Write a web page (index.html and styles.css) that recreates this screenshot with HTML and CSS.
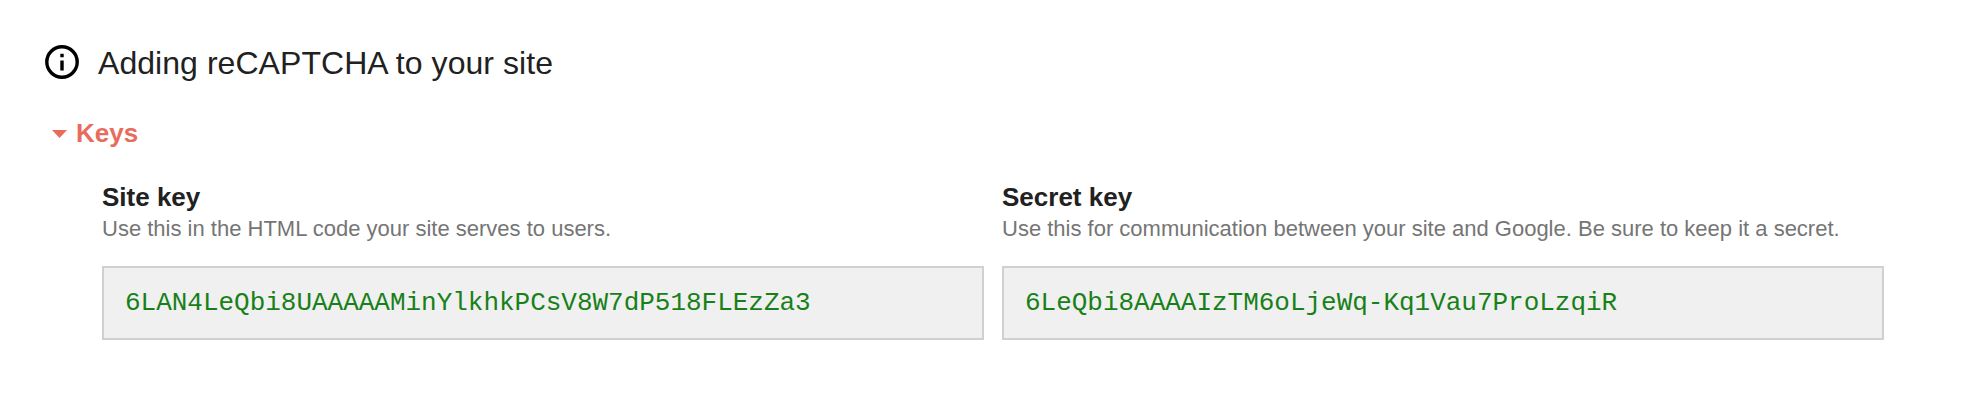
FILE: index.html
```html
<!DOCTYPE html>
<html lang="en">
<head>
<meta charset="utf-8">
<title>Adding reCAPTCHA to your site</title>
<link rel="stylesheet" href="styles.css">
</head>
<body>
<header class="head">
<svg class="info" viewBox="0 0 34 34"><circle cx="17" cy="17" r="15.2" fill="none" stroke="#000" stroke-width="3.4"/><path d="M15.3 8.8h3.4v3.4h-3.4zM15.3 15.5h3.4v10h-3.4z"/></svg>
<h1 class="title">Adding reCAPTCHA to your site</h1>
</header>
<h2 class="section"><svg class="arrow" viewBox="0 0 15 8"><path d="M0 0h15L7.5 8z"/></svg><span>Keys</span></h2>
<main class="keys">
<section class="card">
<h3 class="label">Site key</h3>
<p class="help">Use this in the HTML code your site serves to users.</p>
<div class="value">6LAN4LeQbi8UAAAAAMinYlkhkPCsV8W7dP518FLEzZa3</div>
</section>
<section class="card">
<h3 class="label">Secret key</h3>
<p class="help">Use this for communication between your site and Google. Be sure to keep it a secret.</p>
<div class="value">6LeQbi8AAAAIzTM6oLjeWq-Kq1Vau7ProLzqiR</div>
</section>
</main>
</body>
</html>
```
FILE: styles.css
```css
* { box-sizing: border-box; }
body { margin: 0; padding: 42px 0 0 45px; background: #fff; color: #212121; font-family: "Liberation Sans", Arial, sans-serif; }
h1, h2, h3, p { margin: 0; }
.head { display: flex; gap: 19px; height: 40px; }
.info { width: 34px; height: 34px; margin-top: 3px; flex: none; }
.title { font-size: 32px; line-height: 42px; font-weight: 400; letter-spacing: .05px; white-space: nowrap; }
.section { display: flex; align-items: center; gap: 9px; margin: 36px 0 0 7px; height: 30px; font-size: 26px; line-height: 30px; color: #e86c5d; }
.arrow { width: 15px; height: 8px; margin-top: 2px; fill: currentColor; }
.keys { display: grid; grid-template-columns: 882px 882px; gap: 18px; margin: 34px 0 0 57px; }
.label { font-size: 26px; line-height: 30px; }
.help { margin-top: 2px; font-size: 22px; line-height: 30px; color: #757575; white-space: nowrap; }
.value { height: 74px; margin-top: 22px; padding: 0 21px; border: 2px solid #d0d0d0; background: #f0f0f0; color: #188018; font: 26px/70px "Liberation Mono", "Courier New", monospace; letter-spacing: -.02px; white-space: nowrap; }
```
